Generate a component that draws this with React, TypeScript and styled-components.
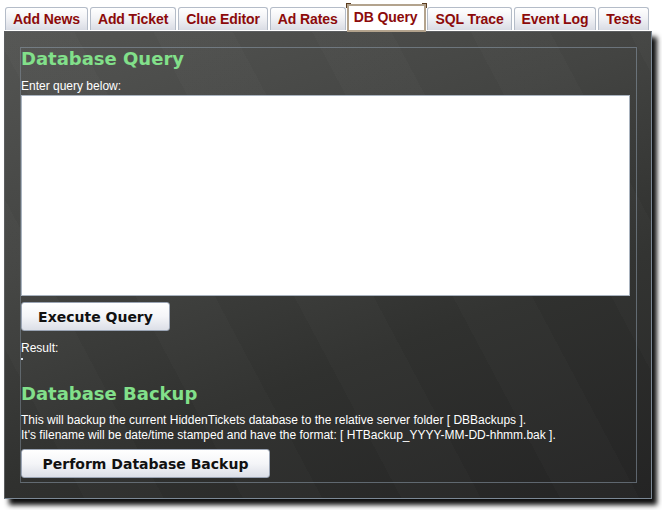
import React from "react";
import styled, { createGlobalStyle, css } from "styled-components";

const GlobalStyle = createGlobalStyle`
  html, body {
    margin: 0;
    padding: 0;
    background: #ffffff;
  }
  body {
    font-family: "Liberation Sans", Arial, sans-serif;
  }
`;

const Page = styled.div`
  width: 662px;
  height: 510px;
  padding: 4px 0 0 4px;
  box-sizing: border-box;
  overflow: hidden;
`;

const TabStrip = styled.div`
  display: flex;
  align-items: flex-end;
  height: 27px;
  padding-left: 1px;
  gap: 2px;
  position: relative;
  z-index: 2;
`;

const Tab = styled.div<{ $active?: boolean }>`
  height: 23px;
  padding: 0 7px;
  display: flex;
  align-items: center;
  box-sizing: border-box;
  border: 1px solid #b4bcc8;
  border-bottom: none;
  border-radius: 3px 3px 0 0;
  background: linear-gradient(to bottom, #ffffff 0%, #f2f3f6 45%, #d9dce4 100%);
  color: #8c0a0a;
  font: bold 14px "Liberation Sans", Arial, sans-serif;
  letter-spacing: -0.1px;
  white-space: nowrap;
  cursor: pointer;
  margin-bottom: 1px;

  ${(p) =>
    p.$active &&
    css`
      height: 28px;
      margin-bottom: -1px;
      margin-left: -1px;
      margin-right: -1px;
      padding: 0 7px 3px 5px;
      border: 2px solid #b3a38d;
      border-radius: 0;
      background: #ffffff;
      position: relative;
      &::before,
      &::after {
        content: "";
        position: absolute;
        top: -3px;
        width: 4px;
        height: 4px;
        border-top: 1px solid #5a3b1e;
      }
      &::before {
        left: -3px;
        border-left: 1px solid #5a3b1e;
      }
      &::after {
        right: -3px;
        border-right: 1px solid #5a3b1e;
      }
    `}
`;

const Panel = styled.div`
  width: 648px;
  height: 468px;
  box-sizing: border-box;
  padding: 15px 14px 15px 15px;
  border: 1px solid #5b5d5f;
  border-right-color: #7b8895;
  border-bottom-color: #7b8895;
  background:
    repeating-linear-gradient(
      62deg,
      rgba(255, 255, 255, 0) 0px,
      rgba(255, 255, 255, 0) 70px,
      rgba(255, 255, 255, 0.016) 70px,
      rgba(255, 255, 255, 0.016) 140px
    ),
    linear-gradient(160deg, #545553 0%, #434442 35%, #30312f 65%, #242424 100%);
  box-shadow: 5px 6px 5px rgba(0, 0, 0, 0.95);
  position: relative;
  z-index: 1;
`;

const Frame = styled.div`
  height: 100%;
  box-sizing: border-box;
  border: 1px solid rgba(140, 155, 170, 0.55);
  border-left-color: rgba(140, 155, 170, 0.45);
  display: flex;
  flex-direction: column;
  padding: 0 6px 0 0;
`;

const Heading = styled.h2`
  margin: 0;
  font: bold 18px "DejaVu Sans", Verdana, sans-serif;
  color: #82e08a;
  line-height: 22px;
`;

const Label = styled.div`
  font: 12px "Liberation Sans", Arial, sans-serif;
  color: #ffffff;
  line-height: 15px;
`;

const QueryBox = styled.textarea`
  display: block;
  width: 609px;
  height: 201px;
  box-sizing: border-box;
  margin: 1px 0 0 0;
  border: 1px solid #a9b3bf;
  background: #ffffff;
  resize: none;
  outline: none;
`;

const Button = styled.button<{ $width: number }>`
  width: ${(p) => p.$width}px;
  height: 29px;
  box-sizing: border-box;
  border: 1px solid #9aa4b4;
  border-radius: 3px;
  background: linear-gradient(to bottom, #ffffff 0%, #f4f5f8 50%, #dcdfe7 100%);
  color: #111111;
  font: bold 14px "DejaVu Sans", Verdana, sans-serif;
  padding: 0;
  cursor: pointer;
`;

const Dot = styled.div`
  width: 2px;
  height: 2px;
  background: #dfe6ee;
  margin-top: 2px;
`;

const Section = styled.div<{ $top: number }>`
  margin-top: ${(p) => p.$top}px;
`;

const tabs = [
  "Add News",
  "Add Ticket",
  "Clue Editor",
  "Ad Rates",
  "DB Query",
  "SQL Trace",
  "Event Log",
  "Tests",
];

export default function App() {
  return (
    <>
      <GlobalStyle />
      <Page>
        <TabStrip>
          {tabs.map((t) => (
            <Tab key={t} $active={t === "DB Query"}>
              {t}
            </Tab>
          ))}
        </TabStrip>
        <Panel>
          <Frame>
            <Heading>Database Query</Heading>
            <Section $top={9}>
              <Label>Enter query below:</Label>
            </Section>
            <QueryBox />
            <Section $top={6}>
              <Button $width={149}>Execute Query</Button>
            </Section>
            <Section $top={10}>
              <Label>Result:</Label>
              <Dot />
            </Section>
            <Section $top={23}>
              <Heading>Database Backup</Heading>
            </Section>
            <Section $top={8}>
              <Label>
                This will backup the current HiddenTickets database to the relative server folder [ DBBackups ].
              </Label>
              <Label>
                It's filename will be date/time stamped and have the format: [ HTBackup_YYYY-MM-DD-hhmm.bak ].
              </Label>
            </Section>
            <Section $top={6}>
              <Button $width={249}>Perform Database Backup</Button>
            </Section>
          </Frame>
        </Panel>
      </Page>
    </>
  );
}
